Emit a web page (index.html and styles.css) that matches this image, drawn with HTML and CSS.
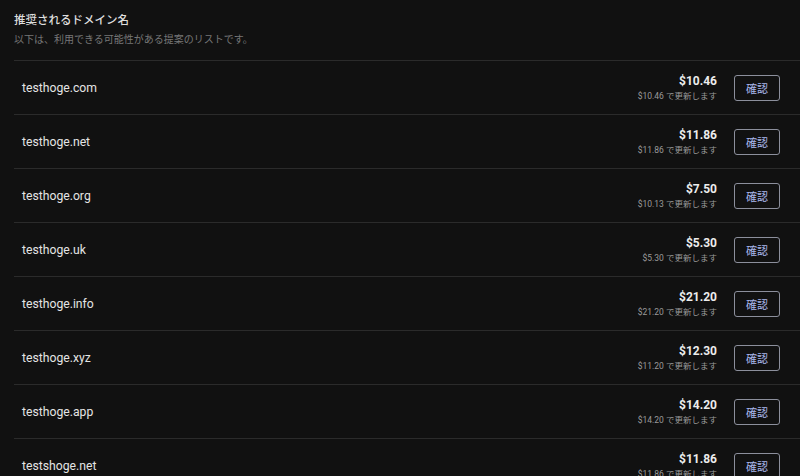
FILE: index.html
```html
<!DOCTYPE html>
<html lang="ja">
<head>
<meta charset="utf-8">
<link rel="stylesheet" href="styles.css">
</head>
<body>
<section class="panel">
  <header class="head">
    <h2 class="title">推奨されるドメイン名</h2>
    <p class="sub">以下は、利用できる可能性がある提案のリストです。</p>
  </header>
  <ul class="list">
    <li class="row"><span class="name">testhoge.com</span><div class="right"><div class="price"><div class="amt">$10.46</div><div class="renew">$10.46 で更新します</div></div><button class="btn">確認</button></div></li>
    <li class="row"><span class="name">testhoge.net</span><div class="right"><div class="price"><div class="amt">$11.86</div><div class="renew">$11.86 で更新します</div></div><button class="btn">確認</button></div></li>
    <li class="row"><span class="name">testhoge.org</span><div class="right"><div class="price"><div class="amt">$7.50</div><div class="renew">$10.13 で更新します</div></div><button class="btn">確認</button></div></li>
    <li class="row"><span class="name">testhoge.uk</span><div class="right"><div class="price"><div class="amt">$5.30</div><div class="renew">$5.30 で更新します</div></div><button class="btn">確認</button></div></li>
    <li class="row"><span class="name">testhoge.info</span><div class="right"><div class="price"><div class="amt">$21.20</div><div class="renew">$21.20 で更新します</div></div><button class="btn">確認</button></div></li>
    <li class="row"><span class="name">testhoge.xyz</span><div class="right"><div class="price"><div class="amt">$12.30</div><div class="renew">$11.20 で更新します</div></div><button class="btn">確認</button></div></li>
    <li class="row"><span class="name">testhoge.app</span><div class="right"><div class="price"><div class="amt">$14.20</div><div class="renew">$14.20 で更新します</div></div><button class="btn">確認</button></div></li>
    <li class="row"><span class="name">testshoge.net</span><div class="right"><div class="price"><div class="amt">$11.86</div><div class="renew">$11.86 で更新します</div></div><button class="btn">確認</button></div></li>
  </ul>
</section>
</body>
</html>
```
FILE: styles.css
```css
html, body {
  margin: 0;
  padding: 0;
  background: #111111;
  height: 100%;
  overflow: hidden;
}
body {
  font-family: Roboto, "Noto Sans CJK JP", sans-serif;
  color: #e4e4e4;
}
.panel {
  padding-left: 14px;
}
.head {
  height: 60px;
  box-sizing: border-box;
  padding-top: 12px;
}
.title {
  margin: 0;
  font-size: 11.5px;
  line-height: 16px;
  font-weight: 500;
  color: #dedede;
}
.sub {
  margin: 5px 0 0;
  font-size: 10px;
  line-height: 14px;
  color: #777777;
}
.list {
  list-style: none;
  margin: 0;
  padding: 0;
}
.row {
  height: 53px;
  border-top: 1px solid #2b2b2b;
  display: flex;
  align-items: center;
  justify-content: space-between;
  padding: 0 20px 0 8px;
}
.name {
  font-size: 12.2px;
  color: #e4e4e4;
}
.right {
  display: flex;
  align-items: center;
  gap: 17px;
}
.price {
  text-align: right;
  display: flex;
  flex-direction: column;
  gap: 1px;
}
.amt {
  font-size: 12px;
  line-height: 16px;
  font-weight: 700;
  color: #ececec;
}
.renew {
  font-size: 8.5px;
  line-height: 12px;
  color: #9a9a9a;
}
.btn {
  width: 46px;
  height: 26px;
  box-sizing: border-box;
  border: 1px solid #8c8f9c;
  border-radius: 3px;
  background: transparent;
  color: #a9b6ea;
  font-family: "Noto Sans CJK JP", sans-serif;
  font-size: 11px;
  padding: 0;
}
```
